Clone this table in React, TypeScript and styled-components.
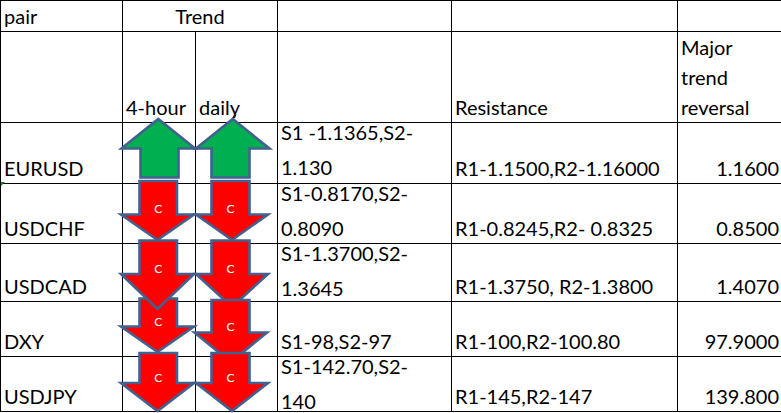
import styled, { createGlobalStyle } from 'styled-components';

const GlobalStyle = createGlobalStyle`
  html, body {
    margin: 0;
    padding: 0;
    background: #fff;
    overflow: hidden;
  }
  body {
    font-family: Lato, 'Liberation Sans', sans-serif;
  }
`;

const Sheet = styled.div`
  position: relative;
  width: 781px;
  height: 413px;
  overflow: hidden;
`;

const Grid = styled.table`
  border-collapse: collapse;
  table-layout: fixed;
  width: 782px;
  font-size: 20px;
  color: #000;
`;

const Row = styled.tr<{ $h: number }>`
  height: ${(p) => p.$h}px;
`;

const Cell = styled.td<{ $align?: 'left' | 'right' | 'center'; $top?: boolean }>`
  border: 1px solid #000;
  padding: 0 3px;
  line-height: 30px;
  vertical-align: ${(p) => (p.$top ? 'top' : 'bottom')};
  text-align: ${(p) => p.$align || 'left'};
  white-space: nowrap;
`;

const SplitText = styled.div`
  display: flex;
  flex-direction: column;
  gap: 17px;
  line-height: 18px;
`;

const Overlay = styled.svg`
  position: absolute;
  left: 0;
  top: 0;
  pointer-events: none;
`;

const ArrowLabel = styled.text`
  font-family: Lato, 'Liberation Sans', sans-serif;
  font-size: 12px;
  fill: #fff;
`;

type Line = { pair: string; h: number; s: string[]; r: string; rev: string };

const lines: Line[] = [
  { pair: 'EURUSD', h: 61, s: ['S1 -1.1365,S2-', '1.130'], r: 'R1-1.1500,R2-1.16000', rev: '1.1600' },
  { pair: 'USDCHF', h: 60, s: ['S1-0.8170,S2-', '0.8090'], r: 'R1-0.8245,R2- 0.8325', rev: '0.8500' },
  { pair: 'USDCAD', h: 58, s: ['S1-1.3700,S2-', '1.3645'], r: 'R1-1.3750, R2-1.3800', rev: '1.4070' },
  { pair: 'DXY', h: 55, s: ['S1-98,S2-97'], r: 'R1-100,R2-100.80', rev: '97.9000' },
  { pair: 'USDJPY', h: 55, s: ['S1-142.70,S2-', '140'], r: 'R1-145,R2-147', rev: '139.800' },
];

// block arrows floating over the trend columns (sheet coordinates)
type Arrow = {
  up?: boolean;
  hl: number; hr: number; sl: number; sr: number;
  start: number; base: number; tip: number;
  label?: number;
};

const col1 = { hl: 121, hr: 194, sl: 139.5, sr: 177 };
const col2 = { hl: 196, hr: 268, sl: 211.5, sr: 249.5 };

const arrows: Arrow[] = [
  { up: true, hl: 121.5, hr: 195, sl: 140.5, sr: 178.5, start: 177.5, base: 148.5, tip: 119 },
  { up: true, hl: 196, hr: 269.5, sl: 211.5, sr: 249.5, start: 177.5, base: 148.5, tip: 119 },
  { ...col1, start: 298.5, base: 326.5, tip: 352, label: 321 },
  { ...col1, start: 181, base: 214.5, tip: 240, label: 208.5 },
  { ...col1, start: 240.5, base: 274, tip: 309, label: 268 },
  { ...col1, start: 353, base: 383, tip: 411, label: 377 },
  { ...col2, start: 181, base: 214.5, tip: 240, label: 208.5 },
  { ...col2, start: 240.5, base: 274, tip: 307, label: 268 },
  { ...col2, hl: 194.5, hr: 267, start: 300, base: 332.5, tip: 362, label: 326 },
  { ...col2, start: 353, base: 383, tip: 411, label: 377 },
];

const BlockArrow = ({ a }: { a: Arrow }) => {
  const mid = (a.hl + a.hr) / 2;
  const pts = [
    [a.sl, a.start], [a.sr, a.start], [a.sr, a.base], [a.hr, a.base],
    [mid, a.tip], [a.hl, a.base], [a.sl, a.base],
  ];
  return (
    <g>
      <polygon
        points={pts.map((p) => p.join(',')).join(' ')}
        fill={a.up ? '#00b050' : '#ff0000'}
        stroke="#42618f"
        strokeWidth={2.6}
        strokeLinejoin="miter"
      />
      {a.label && (
        <ArrowLabel x={(a.sl + a.sr) / 2} y={a.label} textAnchor="middle" dominantBaseline="central">
          C
        </ArrowLabel>
      )}
    </g>
  );
};

export default function App() {
  return (
    <>
      <GlobalStyle />
      <Sheet>
        <Grid>
          <colgroup>
            <col style={{ width: 122 }} />
            <col style={{ width: 73 }} />
            <col style={{ width: 82 }} />
            <col style={{ width: 174 }} />
            <col style={{ width: 226 }} />
            <col style={{ width: 105 }} />
          </colgroup>
          <tbody>
            <Row $h={30}>
              <Cell>pair</Cell>
              <Cell colSpan={2} $align="center">Trend</Cell>
              <Cell />
              <Cell />
              <Cell />
            </Row>
            <Row $h={90}>
              <Cell />
              <Cell>4-hour</Cell>
              <Cell>daily</Cell>
              <Cell />
              <Cell>Resistance</Cell>
              <Cell>
                Major
                <br />
                trend
                <br />
                reversal
              </Cell>
            </Row>
            {lines.map((l) => (
              <Row key={l.pair} $h={l.h}>
                <Cell>{l.pair}</Cell>
                <Cell />
                <Cell />
                <Cell $top={l.s.length > 1}>
                  {l.s.length > 1 ? (
                    <SplitText>
                      {l.s.map((t) => (
                        <span key={t}>{t}</span>
                      ))}
                    </SplitText>
                  ) : (
                    l.s[0]
                  )}
                </Cell>
                <Cell>{l.r}</Cell>
                <Cell $align="right">{l.rev}</Cell>
              </Row>
            ))}
          </tbody>
        </Grid>
        <Overlay width={781} height={413}>
          {arrows.map((a, i) => (
            <BlockArrow key={i} a={a} />
          ))}
          <polygon points="1,182 5,182 1,186" fill="#1e7b34" />
          <line x1={234.5} y1={118} x2={236} y2={114.5} stroke="#000" strokeWidth={1} />
        </Overlay>
      </Sheet>
    </>
  );
}
